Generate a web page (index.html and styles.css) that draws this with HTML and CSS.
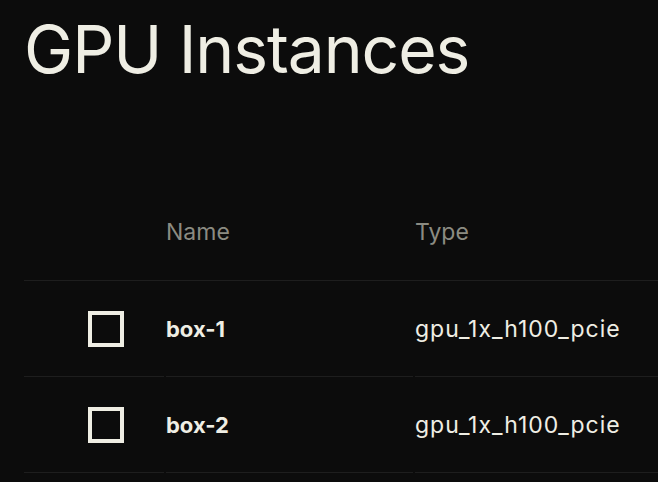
FILE: index.html
```html
<!DOCTYPE html>
<html lang="en">
<head>
    <meta charset="UTF-8">
    <meta name="viewport" content="width=device-width, initial-scale=1.0">
    <title>GPU Instances</title>
    <link rel="stylesheet" href="styles.css">
</head>
<body>
    <div class="page">
        <h1>GPU Instances</h1>

        <div class="table">
            <div class="row head">
                <div class="cell check"></div>
                <div class="cell">Name</div>
                <div class="cell">Type</div>
            </div>
            <div class="row">
                <div class="cell check"><span class="box"></span></div>
                <div class="cell name">box-1</div>
                <div class="cell type">gpu_1x_h100_pcie</div>
            </div>
            <div class="row">
                <div class="cell check"><span class="box"></span></div>
                <div class="cell name">box-2</div>
                <div class="cell type">gpu_1x_h100_pcie</div>
            </div>
        </div>
    </div>
</body>
</html>
```

FILE: styles.css
```css
body {
    margin: 0;
    background-color: #0c0c0c;
    color: #efeee4;
    font-family: Inter, "Liberation Sans", sans-serif;
    overflow: hidden;
}

.page {
    padding: 11px 0 0 24px;
}

h1 {
    margin: 0;
    font-size: 66px;
    font-weight: 400;
    letter-spacing: -1.1px;
    line-height: 76px;
}

.table {
    margin-top: 97px;
}

.row {
    display: grid;
    grid-template-columns: 140px 247px 1fr;
    column-gap: 2px;
}

.cell {
    display: flex;
    align-items: center;
    height: 95px;
    border-bottom: 1px solid #1e1e1e;
    font-size: 22px;
    white-space: nowrap;
}

.head {
    border-bottom: 1px solid #1e1e1e;
}

.head .cell {
    height: 96px;
    border-bottom: none;
    color: #8b8b82;
    font-size: 23px;
    align-items: flex-start;
    padding-top: 34px;
    box-sizing: border-box;
}

.check {
    padding-left: 64px;
}

.box {
    display: block;
    width: 28px;
    height: 28px;
    border: 4px solid #efeee4;
}

.name {
    font-weight: 700;
}

.type {
    font-size: 23px;
    letter-spacing: 1px;
}
```
